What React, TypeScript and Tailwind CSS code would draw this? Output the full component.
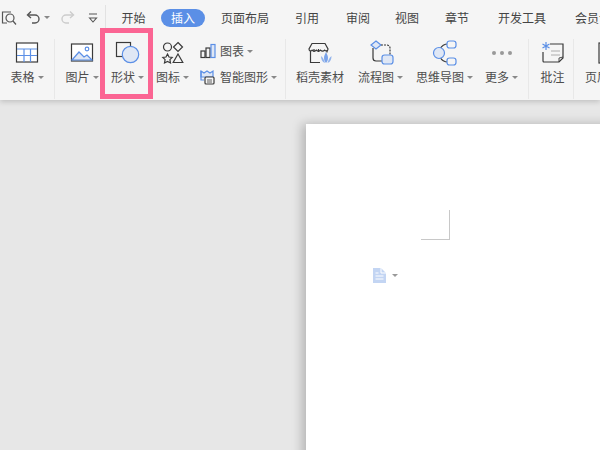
import type { ReactNode } from 'react';

const blue = '#5b8fe6';
const fill = '#dfe7f5';
const ink = '#3a3a3a';

function Caret() {
  return <span className="ml-[3px] inline-block h-0 w-0 border-x-[3px] border-t-[3px] border-x-transparent border-t-[#888]" />;
}

function Tab({ label, className }: { label: string; className: string }) {
  return <div className={`shrink-0 text-center ${className}`}>{label}</div>;
}

function Tool({ icon, label, caret = true, className }: { icon: ReactNode; label: string; caret?: boolean; className: string }) {
  return (
    <div className={`flex h-[60px] shrink-0 flex-col items-center ${className}`}>
      <div className="flex h-[28px] items-center justify-center">{icon}</div>
      <div className="mt-[2px] flex items-center whitespace-nowrap text-[12px] leading-[16px] text-[#4d4d4d]">
        {label}
        {caret && <Caret />}
      </div>
    </div>
  );
}

function Icon({ children, w = 28, h = 28 }: { children: ReactNode; w?: number; h?: number }) {
  return (
    <svg width={w} height={h} viewBox={`0 0 ${w} ${h}`} fill="none" strokeWidth="1.2">
      {children}
    </svg>
  );
}

export default function App() {
  return (
    <div className="relative h-[450px] w-[600px] overflow-hidden bg-[#e7e7e7] font-['Noto_Sans_CJK_SC','Noto_Sans',sans-serif]">
      <div className="relative z-10 h-[100px] bg-[#f5f5f5] shadow-[0_2px_5px_rgba(0,0,0,0.16)]">
        {/* top row */}
        <div className="flex h-[35px] items-center text-[12px] text-[#444]">
          <div className="flex h-[26px] w-[106px] shrink-0 items-center border-r border-[#e2e2e2] pl-[1px]">
            <svg width="16" height="16" viewBox="0 0 16 16" fill="none" stroke="#555" strokeWidth="1.2">
              <path d="M10 2H1.500v11H6" />
              <circle cx="9" cy="8" r="4" />
              <path d="M12 11l3 3.500" />
            </svg>
            <svg className="ml-[9px]" width="15" height="15" viewBox="0 0 15 15" fill="none" stroke="#555" strokeWidth="1.4">
              <path d="M5 1.500L1.500 5 5 8" />
              <path d="M2 5h7a4 4 0 0 1 0 8H6" />
            </svg>
            <Caret />
            <svg className="ml-[10px]" width="15" height="15" viewBox="0 0 15 15" fill="none" stroke="#ccc" strokeWidth="1.4">
              <path d="M10 1.500L13.500 5 10 8" />
              <path d="M13 5H6a4 4 0 0 0 0 8h3" />
            </svg>
            <svg className="ml-[13px]" width="10" height="12" viewBox="0 0 10 12" fill="none" stroke="#555" strokeWidth="1.1">
              <path d="M1 2h8M1.500 6L5 10l3.500-4z" />
            </svg>
          </div>
          <Tab label="开始" className="w-[55px]" />
          <Tab label="插入" className="h-[18px] w-[44px] rounded-full bg-[#5b8fe6] leading-[18px] text-white" />
          <Tab label="页面布局" className="ml-[16px] w-[48px]" />
          <Tab label="引用" className="ml-[26px] w-[24px]" />
          <Tab label="审阅" className="ml-[27px] w-[24px]" />
          <Tab label="视图" className="ml-[25px] w-[24px]" />
          <Tab label="章节" className="ml-[26px] w-[24px]" />
          <Tab label="开发工具" className="ml-[29px] w-[48px]" />
          <Tab label="会员专享" className="ml-[29px] w-[48px]" />
        </div>

        {/* ribbon */}
        <div className="flex h-[65px] items-start pt-[4px]">
          <Tool
            className="w-[55px] border-r border-[#e8e8e8]"
            label="表格"
            icon={
              <Icon w={24} h={22}>
                <rect x="1.500" y="1" width="21" height="19" fill="#fff" stroke={ink} />
                <path d="M2 7h20M2 13.500h20M9 7v13M15.500 7v13" stroke={blue} />
              </Icon>
            }
          />
          <Tool
            className="w-[50px] pl-[4px]"
            label="图片"
            icon={
              <Icon w={24} h={22}>
                <rect x="1.500" y="2" width="21" height="17" stroke={ink} fill="#fff" />
                <path d="M2 18l7-8 5 5 3-2 5 5z" fill={fill} stroke={blue} />
                <circle cx="17" cy="7" r="1.800" stroke={blue} />
              </Icon>
            }
          />
          <Tool
            className="w-[45px]"
            label="形状"
            icon={
              <Icon w={26} h={24}>
                <rect x="1.500" y="1.500" width="14" height="14" stroke={ink} />
                <circle cx="15.500" cy="13.500" r="8.200" fill={fill} stroke={blue} />
              </Icon>
            }
          />
          <Tool
            className="w-[45px]"
            label="图标"
            icon={
              <Icon w={24} h={24}>
                <circle cx="6.500" cy="6" r="4" stroke={ink} />
                <path d="M17 1.500l4.500 4.500-4.500 4.500L12.500 6z" stroke={ink} />
                <path d="M6.500 13l1.500 3 3.200.400-2.300 2.300.600 3.300-3-1.600-3 1.600.600-3.300L1.800 16.400 5 16z" stroke={ink} />
                <path d="M17 13l4.800 8.500h-9.600z" stroke={ink} />
              </Icon>
            }
          />
          <div className="flex h-[60px] w-[91px] shrink-0 flex-col border-r border-[#e8e8e8] pl-[5px] text-[12px] text-[#4d4d4d]">
            <div className="flex h-[24px] items-center">
              <Icon w={16} h={16}>
                <rect x="1" y="8" width="4" height="6.500" stroke={ink} />
                <rect x="6" y="5" width="4" height="9.500" stroke={ink} />
                <rect x="11" y="1.500" width="4" height="13" stroke={blue} fill={fill} />
              </Icon>
              <span className="ml-[4px]">图表</span>
              <Caret />
            </div>
            <div className="mt-[2px] flex h-[24px] items-center">
              <Icon w={16} h={16}>
                <path d="M1 2l3 2 3-2 3 2 3-2v6H1z" fill={fill} stroke={blue} />
                <path d="M1 2v9h3" stroke={blue} />
                <rect x="5" y="8" width="9" height="7" rx="1" fill="#f5f5f5" stroke={ink} />
                <path d="M7 11h5M7 13h5" stroke={ink} strokeWidth="0.8" />
              </Icon>
              <span className="ml-[4px]">智能图形</span>
              <Caret />
            </div>
          </div>
          <Tool
            className="w-[68px]"
            label="稻壳素材"
            caret={false}
            icon={
              <Icon w={26} h={24}>
                <path d="M5 2.500h13l3 5.500c0 2-2 2.500-3.300 1.200-1.200 1.300-3 1.300-4.200 0-1.200 1.300-3 1.300-4.200 0-1.200 1.300-3 1.300-4.200 0C4 10.500 2 10 2 8z" stroke={ink} />
                <path d="M3.500 10v11.500H13M20 9.500v2" stroke={ink} />
                <path d="M7 8v3M11.500 8v3" stroke={ink} />
                <path d="M19 11c-1.200 2.500-2 4-2 6 0 2 1 4 2 5 1-1 2-3 2-5 0-2-.800-3.500-2-6z" fill={blue} opacity="0.8" />
                <path d="M14 15c0 3 1 6 4 7-1-3-1.500-5-4-7zM24.500 15c0 3-1 6-4 7 1-3 1.500-5 4-7z" fill={blue} opacity="0.65" />
              </Icon>
            }
          />
          <Tool
            className="w-[53px]"
            label="流程图"
            icon={
              <Icon w={28} h={26}>
                <path d="M9 1l5 4-5 4-5-4z" fill={fill} stroke={blue} />
                <path d="M6 8v10a3 3 0 0 0 3 3h6" stroke={ink} />
                <path d="M14 5h6a3 3 0 0 1 3 3v7" stroke={ink} strokeDasharray="2 1" />
                <rect x="15" y="15" width="11" height="9" rx="2.500" fill={fill} stroke={blue} />
              </Icon>
            }
          />
          <Tool
            className="w-[75px]"
            label="思维导图"
            icon={
              <Icon w={26} h={26}>
                <path d="M8 9c2-4 4-5 8-5M8 17c2 4 4 5 8 5" stroke={ink} />
                <circle cx="7" cy="13" r="5.500" fill={fill} stroke={blue} />
                <rect x="15" y="1" width="9" height="7" rx="2.500" fill="#f5f5f5" stroke={blue} />
                <rect x="15" y="18" width="9" height="7" rx="2.500" fill="#f5f5f5" stroke={blue} />
              </Icon>
            }
          />
          <Tool
            className="w-[47px] border-r border-[#e8e8e8] pr-[7px]"
            label="更多"
            icon={
              <Icon w={24} h={8}>
                <circle cx="4" cy="4" r="2" fill="#999" />
                <circle cx="12" cy="4" r="2" fill="#999" />
                <circle cx="20" cy="4" r="2" fill="#999" />
              </Icon>
            }
          />
          <Tool
            className="w-[45px] border-r border-[#e8e8e8] pl-[3px]"
            label="批注"
            caret={false}
            icon={
              <Icon w={24} h={24}>
                <path d="M9 3h13v14l-4 4H3a1 1 0 0 1-1-1V11" stroke={ink} />
                <path d="M22 16l-4 1v4" stroke={ink} strokeWidth="0.9" />
                <path d="M10 10h9M10 14h9" stroke="#999" strokeWidth="0.8" />
                <path d="M5 1v8M1.500 3l7 4M8.500 3l-7 4" stroke={blue} />
              </Icon>
            }
          />
          <Tool
            className="w-[46px] items-start pl-[11px]"
            label="页眉"
            caret={false}
            icon={
              <div className="ml-[13px]">
                <Icon w={24} h={24}>
                  <rect x="1" y="2" width="20" height="20" stroke={ink} />
                </Icon>
              </div>
            }
          />
        </div>
      </div>

      {/* paper */}
      <div className="absolute left-[306px] top-[124px] h-[340px] w-[320px] bg-white shadow-[-4px_0_10px_rgba(0,0,0,0.22)]">
        <div className="absolute left-[115px] top-[86px] h-[30px] w-[29px] border-b border-r border-[#c8c8c8]" />
        <div className="absolute left-[67px] top-[144px] flex items-center">
          <svg width="13" height="15" viewBox="0 0 13 15">
            <path d="M0 0h8l5 5v10H0z" fill="#c3d5f3" />
            <path d="M8 0v5h5M2.500 5h3M2.500 8h8M2.500 11h8" stroke="#fff" strokeWidth="1" fill="none" />
          </svg>
          <span className="ml-[6px] inline-block h-0 w-0 border-x-[3px] border-t-[3px] border-x-transparent border-t-[#999]" />
        </div>
      </div>

      {/* highlight */}
      <div className="absolute left-[100px] top-[28px] z-20 h-[71px] w-[53px] border-[5px] border-[#fb6593]" />
    </div>
  );
}
